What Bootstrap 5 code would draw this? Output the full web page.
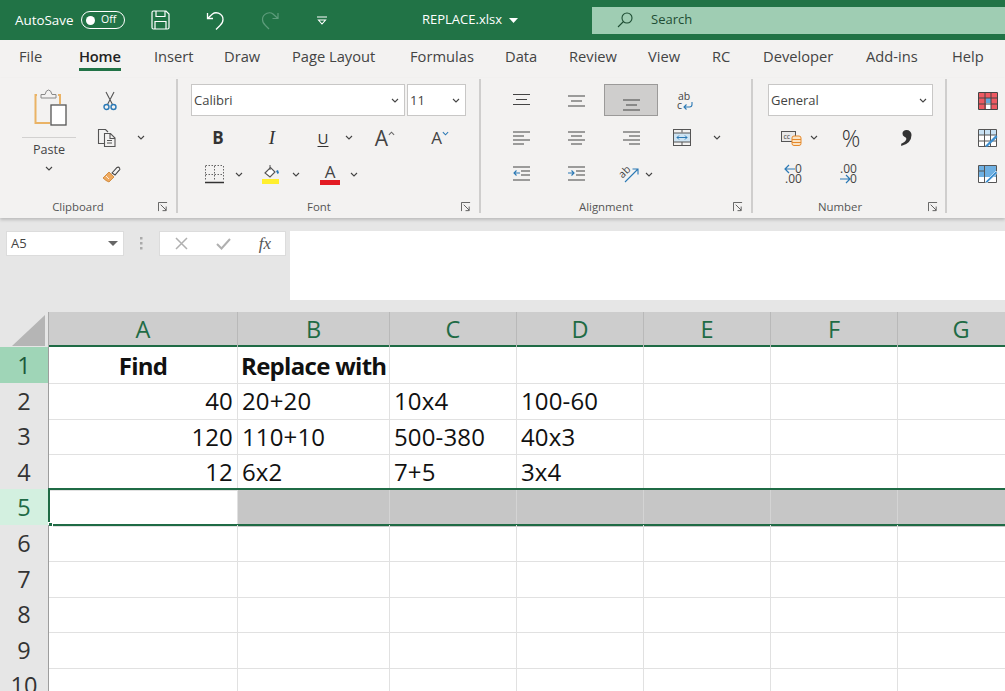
<!DOCTYPE html>
<html lang="en">
<head>
<meta charset="utf-8">
<title>REPLACE.xlsx</title>
<link rel="stylesheet" href="https://cdn.jsdelivr.net/npm/bootstrap@5.3.0/dist/css/bootstrap.min.css">
<style>
html,body{height:691px;overflow:hidden}
body{font-family:"Open Sans","Noto Sans",sans-serif;background:#fff;color:#333;width:1005px}
svg{overflow:visible}
.titlebar{height:40px;background:#217346;color:#fff;font-size:13px;padding:0}
.tb-slot{display:flex;align-items:center;justify-content:center;height:40px;flex:none}
.autosave{padding-left:15px;width:81px;justify-content:flex-start;font-size:13.4px}
.toggle-pill{width:44px;height:18px;border:1.5px solid #fff;border-radius:9px;display:flex;align-items:center;gap:6px;padding-left:4px;font-size:10.5px;margin-right:18px;flex:none}
.toggle-pill i{width:9px;height:9px;background:#fff;border-radius:50%;display:block}
.fname{margin-left:83px;width:80px;font-size:13px;white-space:nowrap}
.searchbox{margin-left:auto;width:413px;height:27px;background:#9fcdb3;color:#1e4d33;display:flex;align-items:center;font-size:13px;padding-left:25px;gap:18px}
.tabs-bar{height:38px;background:#f3f2f1;padding-left:19px;flex-wrap:nowrap}
.tabs-bar .nav-item{flex:none}
.tabs-bar .nav-link{display:inline-block;padding:0;height:28px;line-height:32px;color:#444;font-size:14.7px;white-space:nowrap;border-bottom:3px solid transparent;box-sizing:content-box}
.tabs-bar .nav-link.active{color:#222;font-weight:600;border-bottom-color:#217346;letter-spacing:-.2px}
.tw40{width:40px}.tw51{width:51px}.tw60{width:60px}.tw64{width:64px}.tw68{width:68px}.tw70{width:70px}.tw75{width:75px}.tw79{width:79px}.tw86{width:86px}.tw95{width:95px}.tw103{width:103px}.tw118{width:118px}
.ribbon{height:140px;background:#f3f2f1;display:flex;box-shadow:0 2px 3px rgba(0,0,0,.18);position:relative;z-index:2}
.rgroup{display:flex;flex-direction:column;flex:none;height:140px;border-right:2px solid #cfcecd;padding-top:5px;border-image:linear-gradient(#f3f2f1 0,#f3f2f1 2px,#cfcecd 2px,#cfcecd 134px,#f3f2f1 134px) 1}
.g-clip{width:178px}.g-font{width:303px}.g-align{width:272px}.g-num{width:194px}.g-last{flex:1;border-right:0}
.rrow{display:flex;align-items:center;height:36.5px;flex:none}
.rbody{height:114px;flex:none}
.rfoot{display:flex;align-items:center;height:20px;font-size:11.4px;color:#555;flex:none}
.slot{display:flex;align-items:center;justify-content:center;flex:none;height:100%}
.w2{width:2px}.w4{width:4px}.w5{width:5px}.w6{width:6px}.w9{width:9px}.w10{width:10px}.w11{width:11px}.w12{width:12px}.w13{width:13px}.w14{width:14px}.w15{width:15px}.w18{width:18px}.w20{width:20px}.w21{width:21px}.w22{width:22px}.w24{width:24px}.w28{width:28px}.w31{width:31px}.w34{width:34px}.w36{width:36px}.w40{width:40px}.w48{width:48px}.w50{width:50px}.w54{width:54px}.w56{width:56px}.w60{width:60px}.w62{width:62px}
.w156{width:156px}.w174{width:174px}.w250{width:250px}.w282{width:282px}
.paste-col{width:77px;padding-left:21px;flex:none;display:flex;flex-direction:column;align-items:center}
.paste-inner{width:54px;display:flex;flex-direction:column;align-items:center}
.paste-ico{margin:6px 0 0 3px}
.paste-line{border-top:1px solid #d2d1d0;width:54px;margin-top:11px;height:5px}
.paste-lab{font-size:12.6px;color:#444;line-height:16px}
.tool-col{display:flex;flex-direction:column}
.copy-chev{margin-left:18px}
.combo{background:#fff;border:1px solid #c8c7c6;height:32px;display:flex;align-items:center;font-size:13px;color:#444;padding:1px 5px 0 2px;justify-content:space-between;flex:none;margin-bottom:2px}
.combo-font{width:214px}.combo-size{width:59px;margin-left:2px}.combo-num{width:165px}
.t-b{font-weight:700;font-size:17px;color:#333}
.t-i{font-family:"Liberation Serif",serif;font-style:italic;font-size:19px;color:#333}
.t-u{font-size:15px;color:#333;text-decoration:underline;text-underline-offset:2px}
.t-a{font-size:21px;line-height:20px;color:#444}
.t-a2{font-size:17px;line-height:20px;color:#444}
.t-pct{font-size:23px;font-weight:300;color:#333}
.t-comma{font-family:"Liberation Serif",serif;font-weight:700;font-size:52px;line-height:52px;color:#333;height:52px;margin-top:-34px}
.dec{font-size:12px;line-height:10px;color:#444;text-align:right}
.dec-l{display:flex;align-items:center;justify-content:flex-end;gap:0}
.dec-ar{margin-right:-1px}
.sel-tool{background:#cfcecd;border:1px solid #9b9a99;height:32px;margin-bottom:2px}
.formula-zone{height:94px;background:#e6e6e6;padding:13px 0 0 6px;display:flex;align-items:flex-start}
.namebox{width:118px;height:25px;background:#fff;border:1px solid #dcdcdc;font-size:13px;color:#444;display:flex;align-items:center;justify-content:space-between;padding:0 5px 0 4px;flex:none}
.fx-dots{width:35px;display:flex;justify-content:center;align-items:center;height:25px;flex:none}
.fx-box{width:127px;height:25px;background:#fff;border:1px solid #dcdcdc;display:flex;align-items:center;flex:none}
.fx-box .slot{width:42px}
.fx-txt{font-family:"Liberation Serif",serif;font-style:italic;font-size:17px;color:#555}
.formula-input{flex:1;height:69px;background:#fff;margin-left:4px}
.sheet-head,.sheet-row{display:grid;grid-template-columns:49px 189px 152px 127px 127px 127px 127px 127px;width:1025px}
.sheet-head{height:35px;background:#cdcdcd;border-bottom:2px solid #1f6b45}
.corner{background:#e6e6e6;display:flex;align-items:flex-end;justify-content:flex-end;padding:2px 3px 1px 0;border-right:1px solid #aaa}
.colh{display:flex;align-items:center;justify-content:center;font-size:23.5px;color:#1f6b45;border-right:1px solid #b9b9b9}
.sheet-row{height:35.6px;position:relative}
.rowh{background:#e6e6e6;border-bottom:1px solid #c6c6c6;border-right:1px solid #9d9d9d;display:flex;align-items:center;justify-content:center;font-size:23.5px;color:#333;padding-top:1px}
.rowh.on{background:#9fd5b7;color:#1b5a3a}
.rowh.on2{background:#d3f0e0;color:#1f6b45}
.cell{border-right:1px solid #e1e1e1;border-bottom:1px solid #e1e1e1;font-size:24px;color:#111;display:flex;align-items:center;padding:1px 4px 0;white-space:nowrap;overflow:visible;letter-spacing:.15px;line-height:1}
.cell.r{justify-content:flex-end}
.cell.c{justify-content:center}
.cell.hd{font-weight:700;letter-spacing:-.7px;padding:2px 3px 0}
.cell.dim{background:#c6c6c6;border-right-color:#d4d4d4;border-bottom-color:#c6c6c6}
.sel-outline{position:absolute;left:48px;right:-2px;top:-1px;bottom:-1px;border:2px solid #1f6b45;pointer-events:none}
.sel-handle{position:absolute;left:48px;bottom:-2px;width:5px;height:5px;background:#1f6b45;border:1px solid #fff}
</style>
</head>
<body>
<svg width="0" height="0" class="d-block position-absolute">
<symbol id="chev" viewBox="0 0 8 5"><path d="M1 1l3 3 3-3" fill="none" stroke="#444" stroke-width="1.1"/></symbol>
<symbol id="launch" viewBox="0 0 11 11"><path d="M.5 10V.5H10M3 3l6 6M9 5v4.500H5" fill="none" stroke="#555" stroke-width="1"/></symbol>
</svg>

<div class="titlebar d-flex align-items-center">
  <div class="tb-slot autosave">AutoSave</div>
  <div class="toggle-pill"><i></i><span>Off</span></div>
  <div class="tb-slot w34"><svg width="19" height="20" viewBox="0 0 19 20" fill="none" stroke="#fff" stroke-width="1.2"><path d="M1 2.500Q1 1 2.500 1H15l3 3v13.500Q18 19 16.500 19h-14Q1 19 1 17.500zM5 1v5.500h9V1M4 19v-7.500h11V19"/></svg></div>
  <div class="tb-slot w22"></div>
  <div class="tb-slot w34"><svg width="20" height="20" viewBox="0 0 20 20" fill="none" stroke="#fff" stroke-width="1.3"><path d="M1.500 3v5.500H7M1.800 8.300L6.500 4Q9 2 12.500 3.200 17 5 17 9.500q0 3.500-3 6L10 19.500"/></svg></div>
  <div class="tb-slot w20"></div>
  <div class="tb-slot w34"><svg width="18" height="20" viewBox="0 0 18 20" fill="none" stroke="#5d9c7b" stroke-width="1.2"><path d="M17 3v5.500H11.500M16.700 8.300L12 4Q9.500 2 6 3.200 1.500 5 1.500 9.500q0 3.500 3 6L8 19"/></svg></div>
  <div class="tb-slot w18"></div>
  <div class="tb-slot w34"><svg width="10" height="9" viewBox="0 0 10 9" fill="none" stroke="#fff" stroke-width="1.1"><path d="M0 1h10M1.500 4h7l-3.500 4z"/></svg></div>
  <div class="tb-slot fname">REPLACE.xlsx</div>
  <div class="tb-slot w22"><svg width="9" height="5" viewBox="0 0 9 5"><path d="M0 0h9L4.500 5z" fill="#fff"/></svg></div>
  <div class="searchbox"><svg width="16" height="16" viewBox="0 0 16 16" fill="none" stroke="#1e4d33" stroke-width="1.1"><circle cx="10" cy="6" r="5"/><path d="M6.500 9.500L1 15"/></svg><span>Search</span></div>
</div>

<ul class="nav tabs-bar">
  <li class="nav-item tw60"><a class="nav-link" href="#">File</a></li>
  <li class="nav-item tw75"><a class="nav-link active" href="#">Home</a></li>
  <li class="nav-item tw70"><a class="nav-link" href="#">Insert</a></li>
  <li class="nav-item tw68"><a class="nav-link" href="#">Draw</a></li>
  <li class="nav-item tw118"><a class="nav-link" href="#">Page Layout</a></li>
  <li class="nav-item tw95"><a class="nav-link" href="#">Formulas</a></li>
  <li class="nav-item tw64"><a class="nav-link" href="#">Data</a></li>
  <li class="nav-item tw79"><a class="nav-link" href="#">Review</a></li>
  <li class="nav-item tw64"><a class="nav-link" href="#">View</a></li>
  <li class="nav-item tw51"><a class="nav-link" href="#">RC</a></li>
  <li class="nav-item tw103"><a class="nav-link" href="#">Developer</a></li>
  <li class="nav-item tw86"><a class="nav-link" href="#">Add-ins</a></li>
  <li class="nav-item tw40"><a class="nav-link" href="#">Help</a></li>
</ul>

<div class="ribbon">
  <!-- Clipboard -->
  <div class="rgroup g-clip">
    <div class="rbody d-flex">
      <div class="paste-col"><div class="paste-inner">
        <svg width="34" height="37" viewBox="0 0 34 37" class="paste-ico" fill="none">
          <path d="M3 6H1.500v28H16M24 6h2v9" stroke="#eab366" stroke-width="2"/>
          <rect x="17" y="16" width="15" height="20" fill="#fff" stroke="#555" stroke-width="1.3"/>
          <path d="M7 9V5.500h4Q12 1 14.500 1T18 5.500h4V9z" fill="#f3f2f1" stroke="#888" stroke-width="1"/>
        </svg>
        <div class="paste-line"></div>
        <div class="paste-lab">Paste</div>
        <svg width="8" height="5" class="mt-2"><use href="#chev"/></svg>
      </div></div>
      <div class="tool-col">
        <div class="rrow"><div class="slot w22"></div><svg width="14" height="20" viewBox="0 0 14 20" fill="none" class="ms-1"><path d="M3 1l6.500 12.500M11 1L4.500 13.500" stroke="#555" stroke-width="1.1"/><circle cx="3.500" cy="16" r="2.500" stroke="#2b79b5" stroke-width="1.400"/><circle cx="10.500" cy="16" r="2.500" stroke="#2b79b5" stroke-width="1.400"/></svg></div>
        <div class="rrow"><div class="slot w20"></div><svg width="20" height="20" viewBox="0 0 20 20" fill="none" stroke="#555" stroke-width="1.1"><path d="M7 15.500H1.500V1.500h7L11 4M7.500 5.500h6l4.500 4.500v8.500H7.500zM13 5.500V10.500h5M10 12.500h5M10 15h5"/></svg><div class="slot w12 copy-chev"><svg width="8" height="5"><use href="#chev"/></svg></div></div>
        <div class="rrow"><div class="slot w24"></div><svg width="20" height="18" viewBox="0 0 20 18" fill="none"><path d="M2 13L8 7l5 5-5 5q-3-1-6-4z" fill="#eea95e" stroke="#c97f2f" stroke-width=".8"/><path d="M11 8l5-5.500q1.500-1 2.500.5t-.5 2.500L14 10z" fill="#f3f2f1" stroke="#444" stroke-width="1.100"/><path d="M5 11l3 3" stroke="#fff" stroke-width=".8"/></svg></div>
      </div>
    </div>
    <div class="rfoot"><div class="slot w156">Clipboard</div><div class="slot w14"><svg width="10" height="10"><use href="#launch"/></svg></div></div>
  </div>

  <!-- Font -->
  <div class="rgroup g-font">
    <div class="rbody">
      <div class="rrow"><div class="slot w13"></div>
        <div class="combo combo-font"><span>Calibri</span><svg width="8" height="5"><use href="#chev"/></svg></div>
        <div class="combo combo-size"><span>11</span><svg width="8" height="5"><use href="#chev"/></svg></div>
      </div>
      <div class="rrow"><div class="slot w13"></div>
        <div class="slot w54 t-b">B</div><div class="slot w54 t-i">I</div><div class="slot w4"></div><div class="slot w40 t-u">U</div>
        <div class="slot w12"><svg width="8" height="5"><use href="#chev"/></svg></div>
        <div class="slot w60"><span class="t-a">A</span><svg width="7" height="5" viewBox="0 0 8 5" class="mb-2"><path d="M1 4l3-3 3 3" fill="none" stroke="#666" stroke-width="1.200"/></svg></div>
        <div class="slot w50"><span class="t-a2">A</span><svg width="7" height="5" viewBox="0 0 8 5" class="mb-2"><path d="M1 1l3 3 3-3" fill="none" stroke="#2b79b5" stroke-width="1.200"/></svg></div>
      </div>
      <div class="rrow"><div class="slot w13"></div><div class="slot w6"></div>
        <div class="slot w34"><svg width="19" height="19" viewBox="0 0 19 19" fill="none"><path d="M.5.500h18M.5 9.500h18M9.500 1v15M.5 1v15M18.500 1v15" stroke="#666" stroke-width="1" stroke-dasharray="1.500 1.500"/><path d="M0 17.500h19" stroke="#333" stroke-width="1.500"/></svg></div>
        <div class="slot w2"></div><div class="slot w12"><svg width="8" height="5"><use href="#chev"/></svg></div>
        <div class="slot w9"></div>
        <div class="slot w36"><svg width="20" height="20" viewBox="0 0 20 20" fill="none"><path d="M3 9l5.500-5.500L13 8l-5 5z" fill="#fff" stroke="#555" stroke-width="1.100"/><path d="M8 1v5" stroke="#555"/><path d="M14 7l2-1 1 3-1.500 1z" fill="#2b79b5"/><rect y="15" width="17" height="5" fill="#ffef2e"/></svg></div>
        <div class="slot w12"><svg width="8" height="5"><use href="#chev"/></svg></div>
        <div class="slot w10"></div>
        <div class="slot w36 flex-column"><span class="t-a2 lh-1">A</span><svg width="20" height="5" class="d-block"><rect width="20" height="5" fill="#e31b23"/></svg></div>
        <div class="slot w12"><svg width="8" height="5"><use href="#chev"/></svg></div>
      </div>
    </div>
    <div class="rfoot"><div class="slot w282">Font</div><div class="slot w12"><svg width="10" height="10"><use href="#launch"/></svg></div></div>
  </div>

  <!-- Alignment -->
  <div class="rgroup g-align">
    <div class="rbody">
      <div class="rrow"><div class="slot w13"></div>
        <div class="slot w54"><svg width="17" height="14" viewBox="0 0 17 14" stroke="#444" stroke-width="1.100"><path d="M0 1h17M3 6h11M0 11h17" transform="translate(0 -.5)"/></svg></div>
        <div class="slot w56"><svg width="17" height="14" viewBox="0 0 17 14" stroke="#444" stroke-width="1.100"><path d="M0 2h17M3 7h11M0 12h17"/></svg></div>
        <div class="slot w54 sel-tool"><svg width="17" height="14" viewBox="0 0 17 14" stroke="#444" stroke-width="1.100" class="mt-2"><path d="M0 3h17M3 8h11M0 13h17"/></svg></div>
        <div class="slot w54"><svg width="20" height="20" viewBox="0 0 20 20" fill="none"><text x="3" y="9" font-size="10.500" font-family="Open Sans" fill="#444">ab</text><text x="2" y="18" font-size="10.500" font-family="Open Sans" fill="#444">c</text><path d="M17 11v2.500q0 2.500-2.500 2.500H9M11.500 13.500L9 16l2.500 2.500" stroke="#2b79b5" stroke-width="1.100"/></svg></div>
      </div>
      <div class="rrow"><div class="slot w13"></div>
        <div class="slot w54"><svg width="17" height="16" stroke="#444" stroke-width="1.100"><path d="M0 2h17M0 6h11M0 10h17M0 14h11"/></svg></div>
        <div class="slot w56"><svg width="17" height="16" stroke="#444" stroke-width="1.100"><path d="M0 2h17M3 6h11M0 10h17M3 14h11"/></svg></div>
        <div class="slot w54"><svg width="17" height="16" stroke="#444" stroke-width="1.100"><path d="M0 2h17M6 6h11M0 10h17M6 14h11"/></svg></div>
        <div class="slot w48"><svg width="18" height="17" viewBox="0 0 18 17" fill="none"><rect x=".5" y=".5" width="17" height="16" stroke="#555"/><rect x="1" y="4" width="16" height="9" fill="#cfe4f2"/><path d="M.5 4h17M.5 13h17M9 .5v3M9 13v3.500" stroke="#555"/><path d="M4 8.500h10M6 6.500l-2 2 2 2M12 6.500l2 2-2 2" stroke="#2b79b5"/></svg></div>
        <div class="slot w5"></div>
        <div class="slot w12"><svg width="8" height="5"><use href="#chev"/></svg></div>
      </div>
      <div class="rrow"><div class="slot w13"></div>
        <div class="slot w54"><svg width="17" height="16" fill="none"><path d="M0 1h17M8 5h9M8 9h9M0 14h17" stroke="#444" stroke-width="1.100"/><path d="M7 7H1M3.500 4.500L1 7l2.500 2.500" stroke="#2b79b5" stroke-width="1.100"/></svg></div>
        <div class="slot w56"><svg width="17" height="16" fill="none"><path d="M0 1h17M8 5h9M8 9h9M0 14h17" stroke="#444" stroke-width="1.100"/><path d="M0 7h6M3.500 4.500L6 7 3.500 9.500" stroke="#2b79b5" stroke-width="1.100"/></svg></div>
        <div class="slot w11"></div>
        <div class="slot w28"><svg width="21" height="18" viewBox="0 0 21 18" fill="none"><text x="0" y="11" font-size="10.500" font-family="Open Sans" fill="#444" transform="rotate(-45 5 8)">ab</text><path d="M6 17L19 4M13.500 4H19v5.500" stroke="#2b79b5" stroke-width="1.100"/></svg></div>
        <div class="slot w12"><svg width="8" height="5"><use href="#chev"/></svg></div>
      </div>
    </div>
    <div class="rfoot"><div class="slot w250">Alignment</div><div class="slot w14"><svg width="10" height="10"><use href="#launch"/></svg></div></div>
  </div>

  <!-- Number -->
  <div class="rgroup g-num">
    <div class="rbody">
      <div class="rrow"><div class="slot w15"></div>
        <div class="combo combo-num"><span>General</span><svg width="8" height="5"><use href="#chev"/></svg></div>
      </div>
      <div class="rrow"><div class="slot w21"></div>
        <div class="slot w34"><svg width="21" height="16" viewBox="0 0 21 16" fill="none"><rect x=".5" y="1.500" width="14" height="10" stroke="#555" fill="#e8e8e8"/><text x="2.500" y="9" font-size="7" font-family="Open Sans" fill="#444">cc</text><rect x="11" y="6" width="9" height="9.500" rx="2" fill="#fbe3c3" stroke="#e5892b"/><path d="M11 9.500h9M11 12.500h9" stroke="#e5892b"/></svg></div>
        <div class="slot w12"><svg width="8" height="5"><use href="#chev"/></svg></div>
        <div class="slot w62 t-pct">%</div>
        <div class="slot w50"><span class="t-comma">,</span></div>
      </div>
      <div class="rrow"><div class="slot w15"></div>
        <div class="slot w50"><div class="dec"><div class="dec-l"><svg width="12" height="10" viewBox="0 0 12 10" fill="none" class="dec-ar"><path d="M11 5H1M5 1L1 5l4 4" stroke="#2b79b5" stroke-width="1.200"/></svg><span>0</span></div><div>.00</div></div></div>
        <div class="slot w60"><div class="dec"><div>.00</div><div class="dec-l"><svg width="12" height="10" viewBox="0 0 12 10" fill="none" class="dec-ar"><path d="M1 5h10M7 1l4 4-4 4" stroke="#2b79b5" stroke-width="1.200"/></svg><span>0</span></div></div></div>
      </div>
    </div>
    <div class="rfoot"><div class="slot w174">Number</div><div class="slot w12"><svg width="10" height="10"><use href="#launch"/></svg></div></div>
  </div>

  <!-- Styles (clipped) -->
  <div class="rgroup g-last">
    <div class="rbody">
      <div class="rrow"><div class="slot w31"></div><svg width="20" height="18" viewBox="0 0 20 18" fill="none"><rect width="20" height="18" fill="#fff"/><path d="M1 1h18v5H1zM1 6h7v11H1zM13 6h6v11h-6z" fill="#ee5a62"/><rect x="8" y="6" width="5" height="5" fill="#63a9dc"/><path d="M.5.500h19v17H.5zM.5 6h19M.5 12h19M7 .5v17M13 .5v17" stroke="#444"/></svg></div>
      <div class="rrow"><div class="slot w31"></div><svg width="20" height="20" viewBox="0 0 20 20" fill="none"><rect y="1" width="19" height="18" fill="#fff"/><rect x="1" y="2" width="17" height="5" fill="#c9e2f4"/><path d="M.5 1.500h18v17H.5zM.5 7h18M.5 13h18M6.500 1.500v17M12.500 1.500v17" stroke="#555"/><path d="M7 18l11-11 1.500 2L9 19z" fill="#3e8fcf"/></svg></div>
      <div class="rrow"><div class="slot w31"></div><svg width="20" height="20" viewBox="0 0 20 20" fill="none"><rect y="1" width="19" height="18" fill="#fff"/><rect x="1" y="2" width="17" height="11" fill="#6eb0e2"/><path d="M.5 1.500h18v17H.5zM.5 7h6M6.500 1.500v17" stroke="#555"/><path d="M7 18l11-11 1.500 2L9 19z" fill="#3e8fcf" stroke="#fff" stroke-width=".6"/></svg></div>
    </div>
  </div>
</div>

<div class="formula-zone">
  <div class="namebox"><span>A5</span><svg width="10" height="5" viewBox="0 0 10 5"><path d="M0 0h10L5 5z" fill="#666"/></svg></div>
  <div class="fx-dots"><svg width="3" height="13" fill="#aaa"><rect y="0" width="2.500" height="2.500"/><rect y="5" width="2.500" height="2.500"/><rect y="10" width="2.500" height="2.500"/></svg></div>
  <div class="fx-box">
    <div class="slot"><svg width="13" height="13" fill="none" stroke="#b0b0b0" stroke-width="1.500"><path d="M1 1l11 11M12 1L1 12"/></svg></div>
    <div class="slot"><svg width="15" height="12" fill="none" stroke="#b0b0b0" stroke-width="2"><path d="M1 6l4.500 4.500L14 1"/></svg></div>
    <div class="slot fx-txt">fx</div>
  </div>
  <div class="formula-input"></div>
</div>

<div class="sheet-head">
  <div class="corner"><svg width="33" height="31" viewBox="0 0 33 31"><path d="M33 0v31H0z" fill="#b5b5b5"/></svg></div>
  <div class="colh">A</div><div class="colh">B</div><div class="colh">C</div><div class="colh">D</div><div class="colh">E</div><div class="colh">F</div><div class="colh">G</div>
</div>
<div class="sheet-row"><div class="rowh on">1</div><div class="cell c hd">Find</div><div class="cell hd">Replace with</div><div class="cell"></div><div class="cell"></div><div class="cell"></div><div class="cell"></div><div class="cell"></div></div>
<div class="sheet-row"><div class="rowh">2</div><div class="cell r">40</div><div class="cell">20+20</div><div class="cell">10x4</div><div class="cell">100-60</div><div class="cell"></div><div class="cell"></div><div class="cell"></div></div>
<div class="sheet-row"><div class="rowh">3</div><div class="cell r">120</div><div class="cell">110+10</div><div class="cell">500-380</div><div class="cell">40x3</div><div class="cell"></div><div class="cell"></div><div class="cell"></div></div>
<div class="sheet-row"><div class="rowh">4</div><div class="cell r">12</div><div class="cell">6x2</div><div class="cell">7+5</div><div class="cell">3x4</div><div class="cell"></div><div class="cell"></div><div class="cell"></div></div>
<div class="sheet-row"><div class="rowh on2">5</div><div class="cell"></div><div class="cell dim"></div><div class="cell dim"></div><div class="cell dim"></div><div class="cell dim"></div><div class="cell dim"></div><div class="cell dim"></div><span class="sel-outline"></span><span class="sel-handle"></span></div>
<div class="sheet-row"><div class="rowh">6</div><div class="cell"></div><div class="cell"></div><div class="cell"></div><div class="cell"></div><div class="cell"></div><div class="cell"></div><div class="cell"></div></div>
<div class="sheet-row"><div class="rowh">7</div><div class="cell"></div><div class="cell"></div><div class="cell"></div><div class="cell"></div><div class="cell"></div><div class="cell"></div><div class="cell"></div></div>
<div class="sheet-row"><div class="rowh">8</div><div class="cell"></div><div class="cell"></div><div class="cell"></div><div class="cell"></div><div class="cell"></div><div class="cell"></div><div class="cell"></div></div>
<div class="sheet-row"><div class="rowh">9</div><div class="cell"></div><div class="cell"></div><div class="cell"></div><div class="cell"></div><div class="cell"></div><div class="cell"></div><div class="cell"></div></div>
<div class="sheet-row"><div class="rowh">10</div><div class="cell"></div><div class="cell"></div><div class="cell"></div><div class="cell"></div><div class="cell"></div><div class="cell"></div><div class="cell"></div></div>
<script src="https://cdn.jsdelivr.net/npm/bootstrap@5.3.0/dist/js/bootstrap.bundle.min.js"></script>
</body>
</html>
